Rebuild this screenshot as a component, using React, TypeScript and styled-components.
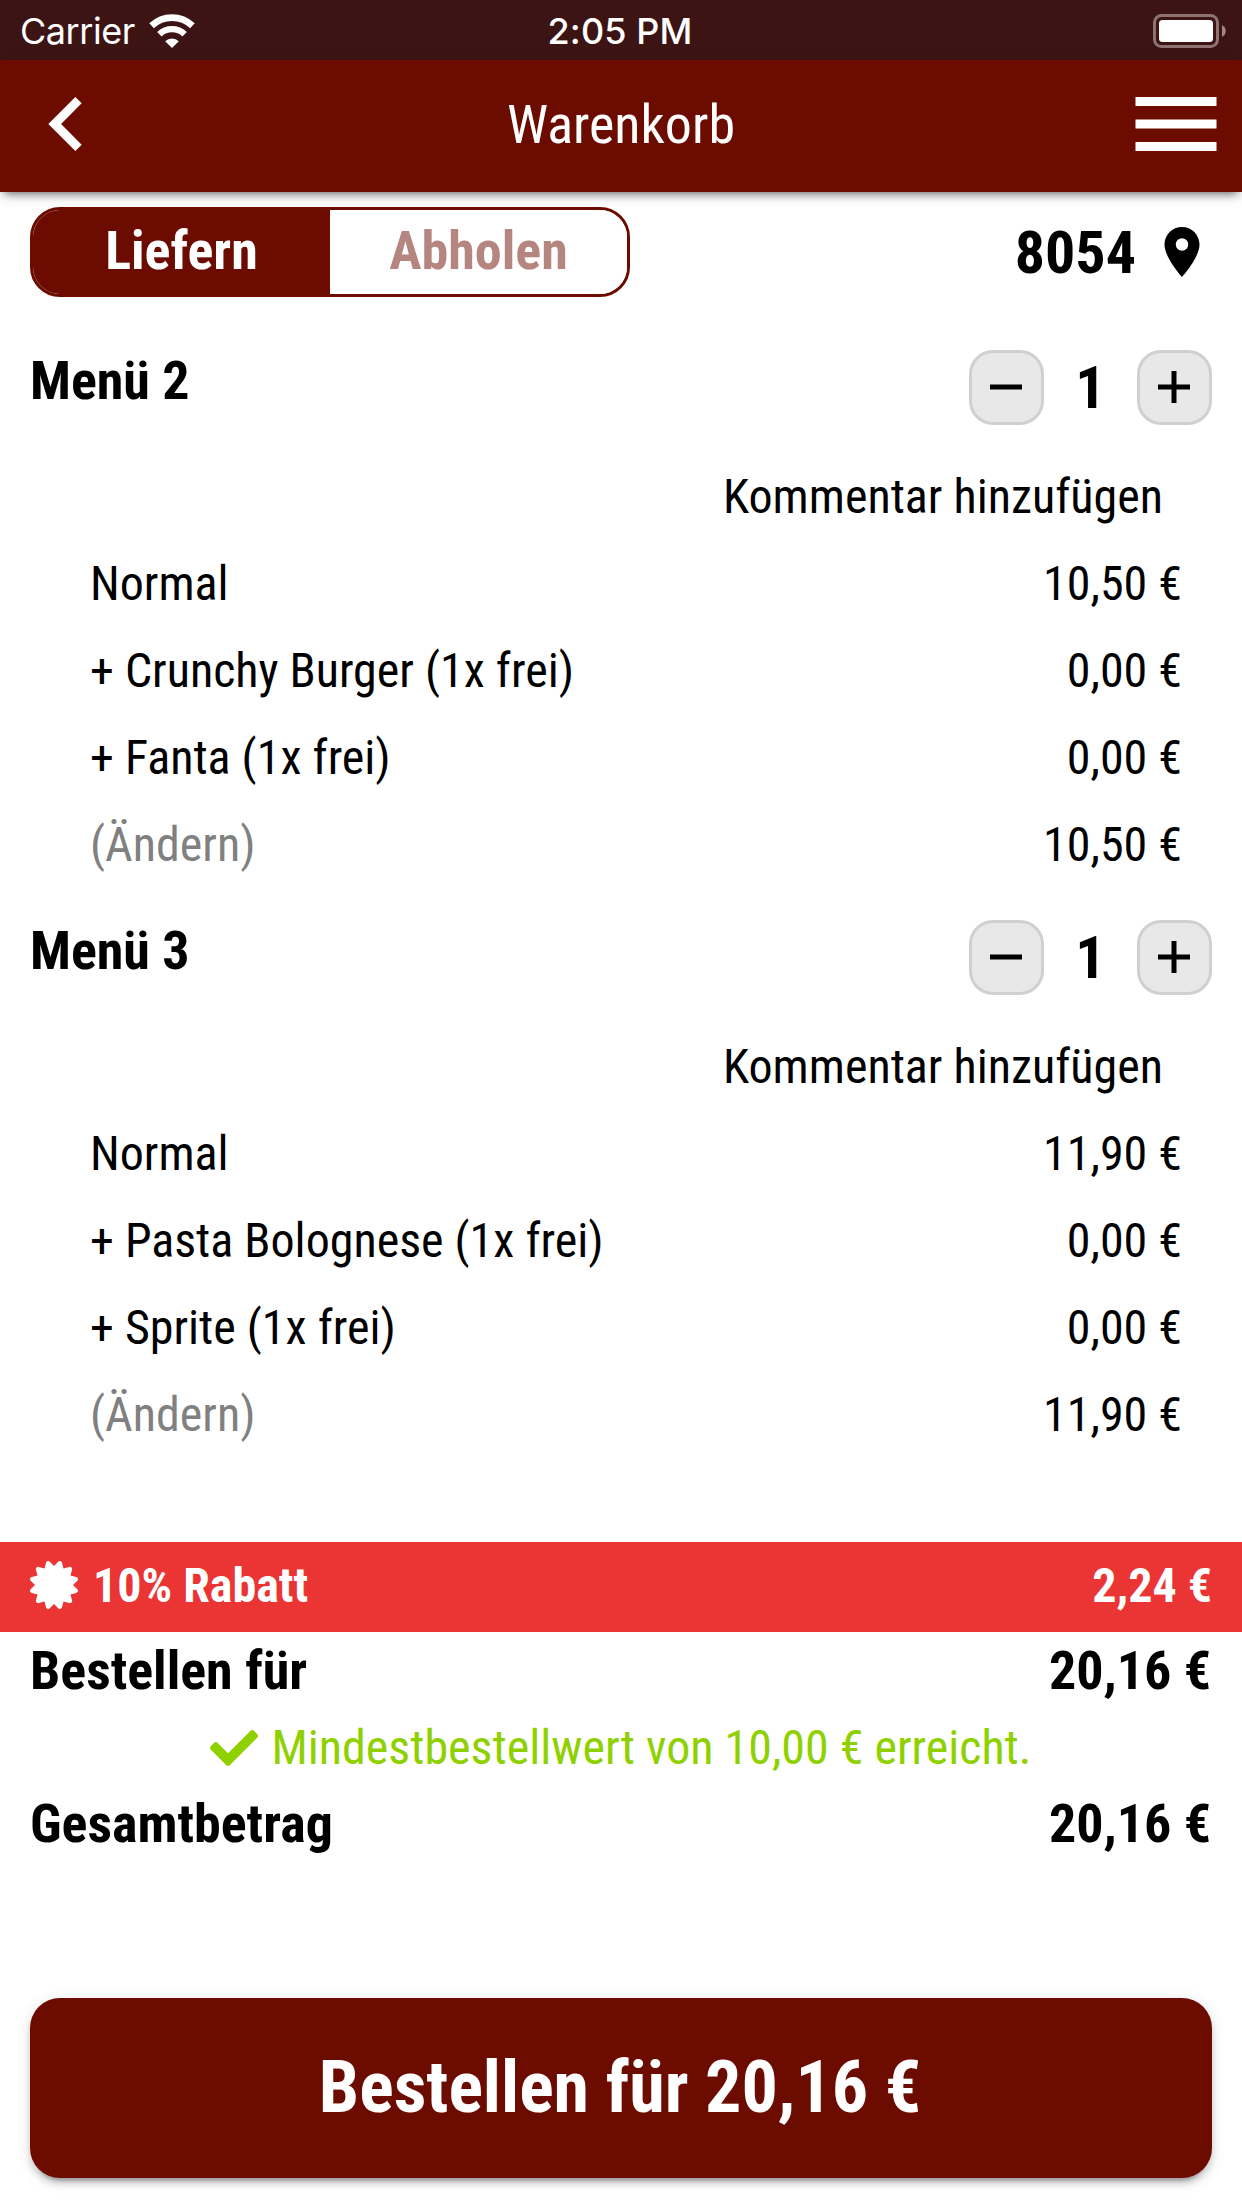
import React from "react";
import styled, { createGlobalStyle } from "styled-components";
import { FaCertificate, FaCheck } from "react-icons/fa";
import { MdMenu, MdPlace } from "react-icons/md";

const maroon = "#6c0c00";

const GlobalStyle = createGlobalStyle`
  * { box-sizing: border-box; }
  body { margin: 0; background: #fff; }
  button { font: inherit; color: inherit; border: 0; padding: 0; margin: 0; background: none; }
`;

const Screen = styled.div`
  width: 1242px;
  height: 2208px;
  display: flex;
  flex-direction: column;
  overflow: hidden;
  background: #fff;
  color: #000;
  font-family: "Roboto Condensed", Roboto, sans-serif;
  font-size: 48px;
  line-height: 1;
`;

const StatusBar = styled.div`
  height: 60px;
  flex: none;
  display: grid;
  grid-template-columns: 1fr auto 1fr;
  align-items: center;
  padding: 1px 16px 0 18px;
  background: #3c1414;
  color: #fff;
  font-family: Inter, sans-serif;
  font-size: 36px;
`;

const Carrier = styled.div`
  display: flex;
  align-items: center;
  gap: 14px;
  padding-left: 2px;
  letter-spacing: -0.45px;
`;

const Clock = styled.div`
  padding-right: 4px;
  font-weight: 500;
  letter-spacing: 0.1px;
`;

const BatterySlot = styled.div`
  display: flex;
  justify-content: flex-end;
`;

const Header = styled.header`
  height: 132px;
  flex: none;
  display: grid;
  grid-template-columns: 1fr auto 1fr;
  align-items: center;
  background: ${maroon};
  color: #fff;
  box-shadow: 0 6px 9px -5px rgba(0, 0, 0, 0.6), 0 3px 15px rgba(0, 0, 0, 0.12);
`;

const Title = styled.h1`
  margin: 0;
  padding-bottom: 3px;
  font-size: 54px;
  font-weight: 400;
`;

const HeaderButton = styled.button<{ $end?: boolean }>`
  display: flex;
  justify-self: ${(p) => (p.$end ? "end" : "start")};
  padding: ${(p) => (p.$end ? "0 12px 4px 0" : "0 0 4px 48px")};
`;

const ModeBar = styled.div`
  height: 126px;
  flex: none;
  display: flex;
  justify-content: space-between;
  padding: 15px 30px 0;
`;

const Switch = styled.div`
  width: 600px;
  height: 90px;
  display: grid;
  grid-template-columns: 1fr 1fr;
  overflow: hidden;
  border: 3px solid ${maroon};
  border-radius: 30px;
`;

const Mode = styled.button<{ $active?: boolean }>`
  padding-bottom: 2px;
  font-size: 54px;
  font-weight: 700;
  line-height: 82px;
  background: ${(p) => (p.$active ? maroon : "#fff")};
  color: ${(p) => (p.$active ? "#fff" : "#b58680")};
`;

const Area = styled.div`
  height: 90px;
  display: flex;
  align-items: center;
  gap: 16px;
  font-size: 60px;
  font-weight: 700;
`;

const AreaCode = styled.span`
  padding-top: 2px;
`;

const Item = styled.section`
  display: flex;
  flex-direction: column;
`;

const ItemHead = styled.div`
  height: 135px;
  display: flex;
  justify-content: space-between;
  align-items: flex-start;
  padding: 32px 30px 0;
`;

const ItemName = styled.h2`
  margin: 0;
  font-size: 54px;
  font-weight: 700;
  line-height: 62px;
`;

const Stepper = styled.div`
  display: grid;
  grid-template-columns: 75px 93px 75px;
  align-items: center;
`;

const StepButton = styled.button`
  width: 75px;
  height: 75px;
  display: flex;
  align-items: center;
  justify-content: center;
  padding: 0 1px 2px 0;
  border: 3px solid #d0d0d0;
  border-radius: 24px;
  background: #e8e8e8;
`;

const Count = styled.span`
  text-align: center;
  font-size: 60px;
  font-weight: 700;
  line-height: 75px;
`;

const CommentRow = styled.div`
  display: flex;
  justify-content: flex-end;
  padding-right: 79px;
  line-height: 87px;
`;

const Line = styled.div<{ $muted?: boolean }>`
  display: flex;
  justify-content: space-between;
  padding: 0 60px 0 90px;
  line-height: 87px;

  & > :first-child {
    color: ${(p) => (p.$muted ? "#808080" : "inherit")};
  }
`;

const Discount = styled.div`
  height: 90px;
  flex: none;
  display: flex;
  align-items: center;
  justify-content: space-between;
  margin-top: 84px;
  padding: 0 30px 2px;
  background: #eb3434;
  color: #fff;
  font-weight: 700;
`;

const DiscountLabel = styled.div`
  display: flex;
  align-items: center;
  gap: 15px;

  svg {
    margin-bottom: 3px;
  }
`;

const TotalRow = styled.div`
  display: flex;
  justify-content: space-between;
  padding: 0 31px 0 30px;
  font-size: 54px;
  font-weight: 700;
  line-height: 77px;
`;

const Notice = styled.div`
  height: 76px;
  display: flex;
  align-items: center;
  justify-content: center;
  gap: 14px;
  padding: 2px 1px 0 0;
  color: #8fd100;
`;

const Footer = styled.footer`
  margin-top: auto;
  padding: 0 30px 30px;
`;

const OrderButton = styled.button`
  width: 100%;
  height: 180px;
  padding-right: 2px;
  border-radius: 30px;
  background: ${maroon};
  color: #fff;
  font-size: 72px;
  font-weight: 700;
  box-shadow: 0 9px 3px -6px rgba(0, 0, 0, 0.2), 0 6px 6px rgba(0, 0, 0, 0.14),
    0 3px 15px rgba(0, 0, 0, 0.12);
`;

const WifiIcon = () => (
  <svg width="46" height="34" viewBox="0 0 46 34" fill="none">
    <path d="M2.600 11.800a29.500 29.500 0 0 1 40.800 0" stroke="#fff" strokeWidth="6.800" />
    <path d="M10.400 20.200a18.200 18.200 0 0 1 25.200 0" stroke="#fff" strokeWidth="6.400" />
    <path d="M23 34l-6.800-6.800a9.800 9.800 0 0 1 13.600 0z" fill="#fff" />
  </svg>
);

const BatteryIcon = () => (
  <svg width="73" height="34" viewBox="0 0 73 34">
    <rect x="1.5" y="1.5" width="63" height="31" rx="7" fill="none" stroke="#8f7272" strokeWidth="3" />
    <rect x="6" y="6" width="54" height="22" rx="3.5" fill="#fff" />
    <path d="M69 11c5 2.600 5 9.400 0 12z" fill="#a08686" />
  </svg>
);

const BackIcon = () => (
  <svg width="34" height="54" viewBox="0 0 7.41 12" fill="#fff">
    <path d="M7.41 1.410L6 0 0 6l6 6 1.410-1.410L2.830 6z" />
  </svg>
);

const StepIcon = ({ plus }: { plus?: boolean }) => (
  <svg width="32" height="32" viewBox="0 0 32 32" fill="#000">
    <rect x="0" y="13.5" width="32" height="5" />
    {plus && <rect x="13.5" y="0" width="5" height="32" />}
  </svg>
);

type CartItem = { name: string; lines: [string, string][]; total: string };

const cart: CartItem[] = [
  {
    name: "Menü 2",
    lines: [
      ["Normal", "10,50 €"],
      ["+ Crunchy Burger (1x frei)", "0,00 €"],
      ["+ Fanta (1x frei)", "0,00 €"],
    ],
    total: "10,50 €",
  },
  {
    name: "Menü 3",
    lines: [
      ["Normal", "11,90 €"],
      ["+ Pasta Bolognese (1x frei)", "0,00 €"],
      ["+ Sprite (1x frei)", "0,00 €"],
    ],
    total: "11,90 €",
  },
];

export default function App() {
  return (
    <Screen>
      <GlobalStyle />
      <StatusBar>
        <Carrier>
          Carrier <WifiIcon />
        </Carrier>
        <Clock>2:05 PM</Clock>
        <BatterySlot>
          <BatteryIcon />
        </BatterySlot>
      </StatusBar>
      <Header>
        <HeaderButton aria-label="Zurück">
          <BackIcon />
        </HeaderButton>
        <Title>Warenkorb</Title>
        <HeaderButton $end aria-label="Menü">
          <MdMenu size={108} />
        </HeaderButton>
      </Header>
      <ModeBar>
        <Switch>
          <Mode $active>Liefern</Mode>
          <Mode>Abholen</Mode>
        </Switch>
        <Area>
          <AreaCode>8054</AreaCode>
          <MdPlace size={60} />
        </Area>
      </ModeBar>
      {cart.map((item) => (
        <Item key={item.name}>
          <ItemHead>
            <ItemName>{item.name}</ItemName>
            <Stepper>
              <StepButton aria-label="Weniger">
                <StepIcon />
              </StepButton>
              <Count>1</Count>
              <StepButton aria-label="Mehr">
                <StepIcon plus />
              </StepButton>
            </Stepper>
          </ItemHead>
          <CommentRow>Kommentar hinzufügen</CommentRow>
          {item.lines.map(([label, price]) => (
            <Line key={label}>
              <span>{label}</span>
              <span>{price}</span>
            </Line>
          ))}
          <Line $muted>
            <span>(Ändern)</span>
            <span>{item.total}</span>
          </Line>
        </Item>
      ))}
      <Discount>
        <DiscountLabel>
          <FaCertificate size={48} />
          10% Rabatt
        </DiscountLabel>
        <span>2,24 €</span>
      </Discount>
      <TotalRow>
        <span>Bestellen für</span>
        <span>20,16 €</span>
      </TotalRow>
      <Notice>
        <FaCheck size={48} />
        Mindestbestellwert von 10,00 € erreicht.
      </Notice>
      <TotalRow>
        <span>Gesamtbetrag</span>
        <span>20,16 €</span>
      </TotalRow>
      <Footer>
        <OrderButton>Bestellen für 20,16 €</OrderButton>
      </Footer>
    </Screen>
  );
}
